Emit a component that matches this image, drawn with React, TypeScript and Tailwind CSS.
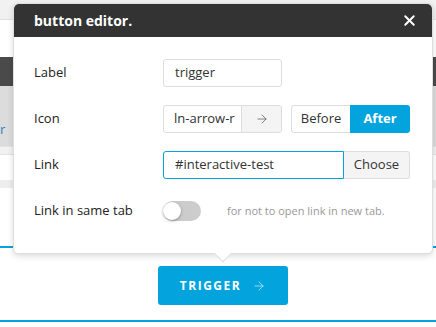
import { X, ArrowRight } from 'lucide-react'

const font = { fontFamily: '"Open Sans", "Noto Sans", sans-serif' }

function Row({ label, children }: { label: string; children: React.ReactNode }) {
  return (
    <div className="flex items-center h-[28px]">
      <div className="w-[129px] text-[13px] text-[#222]">{label}</div>
      {children}
    </div>
  )
}

function Background() {
  return (
    <div className="flex flex-col w-full h-full">
      <div className="h-[20px] bg-[#f1f1f1] border-b border-[#e2e2e2]" />
      <div className="h-[37px] bg-white" />
      <div className="h-[29px] bg-[#4a4a4a]" />
      <div className="h-[60px] bg-[#dcdcdc] flex items-end pb-[10px]">
        <span className="text-[13px] text-[#2f7fc1] leading-none">r</span>
      </div>
      <div className="h-[9px] bg-[#f2f2f2] border-y border-[#e3e3e3]" />
      <div className="h-[25px] bg-white" />
      <div className="h-[8px] bg-[#eeeeee]" />
      <div className="h-[60px] bg-white border-b-2 border-[#03a4dd]" />
      <div className="flex-1 flex flex-col items-center pt-[18px] pl-[10px]">
        <button className="w-[130px] h-[39px] bg-[#03a4dd] rounded-[3px] flex items-center justify-center gap-[11px] text-white text-[12px] font-bold tracking-[1.5px]">
          TRIGGER
          <ArrowRight size={14} strokeWidth={1.25} className="opacity-80" />
        </button>
      </div>
      <div className="h-[2px] bg-[#03a4dd] mb-[5px]" />
    </div>
  )
}

export default function App() {
  return (
    <div className="relative w-[436px] h-[327px] overflow-hidden bg-white" style={font}>
      <Background />

      <div className="absolute left-[13px] top-[3px] w-[420px] rounded-[5px] bg-white border border-[#dedede] shadow-[0_2px_6px_rgba(0,0,0,0.15)]">
        <div className="h-[33px] bg-[#333333] rounded-t-[5px] flex items-center justify-between pl-[20px] pr-[14px]">
          <span className="text-white text-[14px] font-bold">button editor.</span>
          <X size={17} strokeWidth={2.75} className="text-white" />
        </div>

        <div className="flex flex-col gap-[18px] pl-[20px] pt-[22px] pb-[28px] pr-[22px]">
          <Row label="Label">
            <div className="w-[119px] h-[28px] border border-[#dddddd] rounded-[3px] flex items-center px-[11px] text-[13px] text-[#333]">
              trigger
            </div>
          </Row>

          <Row label="Icon">
            <div className="w-[119px] h-[28px] border border-[#dddddd] rounded-[3px] flex overflow-hidden text-[13px] text-[#333]">
              <div className="w-[78px] shrink-0 flex items-center pl-[10px] whitespace-nowrap border-r border-[#dddddd]">ln-arrow-r</div>
              <div className="flex-1 bg-[#f4f4f4] flex items-center justify-center text-[#555]">
                <ArrowRight size={14} strokeWidth={1.25} />
              </div>
            </div>
            <div className="ml-[9px] w-[119px] h-[28px] flex text-[13px] rounded-[3px] overflow-hidden">
              <div className="w-[59px] border border-r-0 border-[#dddddd] rounded-l-[3px] flex items-center justify-center text-[#333]">
                Before
              </div>
              <div className="flex-1 bg-[#03a4dd] flex items-center justify-center text-white font-bold">
                After
              </div>
            </div>
          </Row>

          <Row label="Link">
            <div className="w-[181px] h-[28px] border border-[#03a4dd] rounded-l-[3px] flex items-center px-[11px] text-[13px] text-[#333]">
              #interactive-test
            </div>
            <div className="w-[66px] h-[28px] border border-l-0 border-[#dddddd] rounded-r-[3px] bg-[#f4f4f4] flex items-center justify-center text-[13px] text-[#333]">
              Choose
            </div>
          </Row>

          <Row label="Link in same tab">
            <div className="relative w-[38px] h-[20px] rounded-full bg-[#cccccc]">
              <div className="absolute left-0 top-[1px] w-[18px] h-[18px] rounded-full bg-white shadow-[0_1px_3px_rgba(0,0,0,0.35)]" />
            </div>
            <span className="ml-[26px] text-[11px] text-[#999999]">for not to open link in new tab.</span>
          </Row>
        </div>

        <div className="absolute left-[203px] -bottom-[7px] w-[12px] h-[12px] bg-white border-r border-b border-[#dedede] rotate-45" />
      </div>
    </div>
  )
}
